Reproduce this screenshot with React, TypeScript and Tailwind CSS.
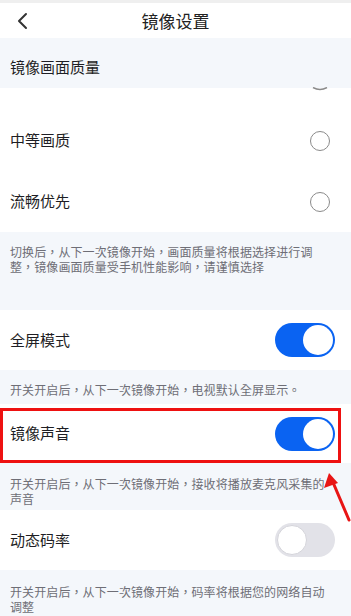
import React from "react"

const font = { fontFamily: '"Noto Sans CJK SC", "Noto Sans", sans-serif' }
const noteFont = { fontFamily: '"Noto Sans CJK TC", "Noto Sans CJK SC", sans-serif' }

const Radio = () => (
  <div className="w-5 h-5 rounded-full border-[1.5px] border-[#8a8a8a] bg-white" />
)

const Toggle = ({ on }: { on: boolean }) =>
  on ? (
    <div className="w-[60px] h-[34px] rounded-full bg-[#0a63f2] flex items-center justify-end pr-[2px]">
      <div className="w-[30px] h-[30px] rounded-full bg-white" />
    </div>
  ) : (
    <div className="w-[60px] h-[34px] rounded-full bg-[#e2e2e8] flex items-center pl-[2px]">
      <div className="w-[30px] h-[30px] rounded-full bg-white border border-[#d4d4da]" />
    </div>
  )

const Note = ({ children, className = "" }: { children: React.ReactNode; className?: string }) => (
  <div
    lang="zh-TW"
    className={`bg-[#f4f7fb] pl-[10px] pr-[21px] text-[12px] leading-[15px] tracking-[0.1px] text-[#6e6e76] ${className}`}
    style={noteFont}
  >
    {children}
  </div>
)

const Row = ({ label, right, className = "" }: { label: string; right: React.ReactNode; className?: string }) => (
  <div className={`relative bg-white flex items-center justify-between pl-[10px] pr-[16px] ${className}`}>
    <span className="text-[15px] text-[#1e1e24]">{label}</span>
    {right}
  </div>
)

export default function App() {
  return (
    <div className="relative w-[351px] h-[616px] overflow-hidden bg-[#f4f7fb]" style={font}>
      <div className="h-[3px] bg-[#efefef]" />
      <div className="relative h-[35px] bg-white flex items-center justify-center">
        <svg className="absolute left-[15px] top-[9px]" width="14" height="18" viewBox="0 0 14 18">
          <path d="M11 2 L4 9 L11 16" fill="none" stroke="#333" strokeWidth="2" strokeLinecap="round" strokeLinejoin="round" />
        </svg>
        <span className="text-[17px] text-[#222]">镜像设置</span>
      </div>

      <div className="h-[50px] bg-[#f4f7fb] pl-[10px] pt-[19px] text-[15px] leading-[20px] text-[#1e1e24]">
        镜像画面质量
      </div>

      <div className="bg-white">
        <div className="h-[22px] flex justify-end pr-[21px]">
          <svg width="20" height="4" viewBox="0 0 20 4" className="mt-[-1px]">
            <path d="M3 0.5 Q10 4.5 17 0.5" fill="none" stroke="#8a8a8a" strokeWidth="1.5" />
          </svg>
        </div>
        <Row label="中等画质" right={<Radio />} className="h-[61px] pr-[21px]" />
        <Row label="流畅优先" right={<Radio />} className="h-[61px] pr-[21px]" />
      </div>

      <Note className="h-[78px] pt-[12px]">
        切换后，从下一次镜像开始，画面质量将根据选择进行调整，镜像画面质量受手机性能影响，请谨慎选择
      </Note>

      <Row label="全屏模式" right={<Toggle on />} className="h-[60px]" />
      <Note className="h-[34px] pt-[12px]">开关开启后，从下一次镜像开始，电视默认全屏显示。</Note>

      <Row label="镜像声音" right={<Toggle on />} className="h-[59px]" />
      <Note className="h-[47px] pt-[13px]">开关开启后，从下一次镜像开始，接收将播放麦克风采集的声音</Note>

      <Row label="动态码率" right={<Toggle on={false} />} className="h-[60px] pr-[14px]" />
      <Note className="h-[60px] pt-[14px]">开关开启后，从下一次镜像开始，码率将根据您的网络自动调整</Note>

      {/* red highlight box */}
      <div className="absolute left-0 top-[408px] w-[341px] h-[55px] border-[3px] border-[#ee1111]" />
      {/* red arrow */}
      <svg className="absolute left-[320px] top-[466px]" width="31" height="56" viewBox="0 0 31 56">
        <path d="M29 54 L12 14" stroke="#e81515" strokeWidth="3" strokeLinecap="round" />
        <path d="M9 7 L4 22 L18 17 Z" fill="#e81515" />
      </svg>
    </div>
  )
}
